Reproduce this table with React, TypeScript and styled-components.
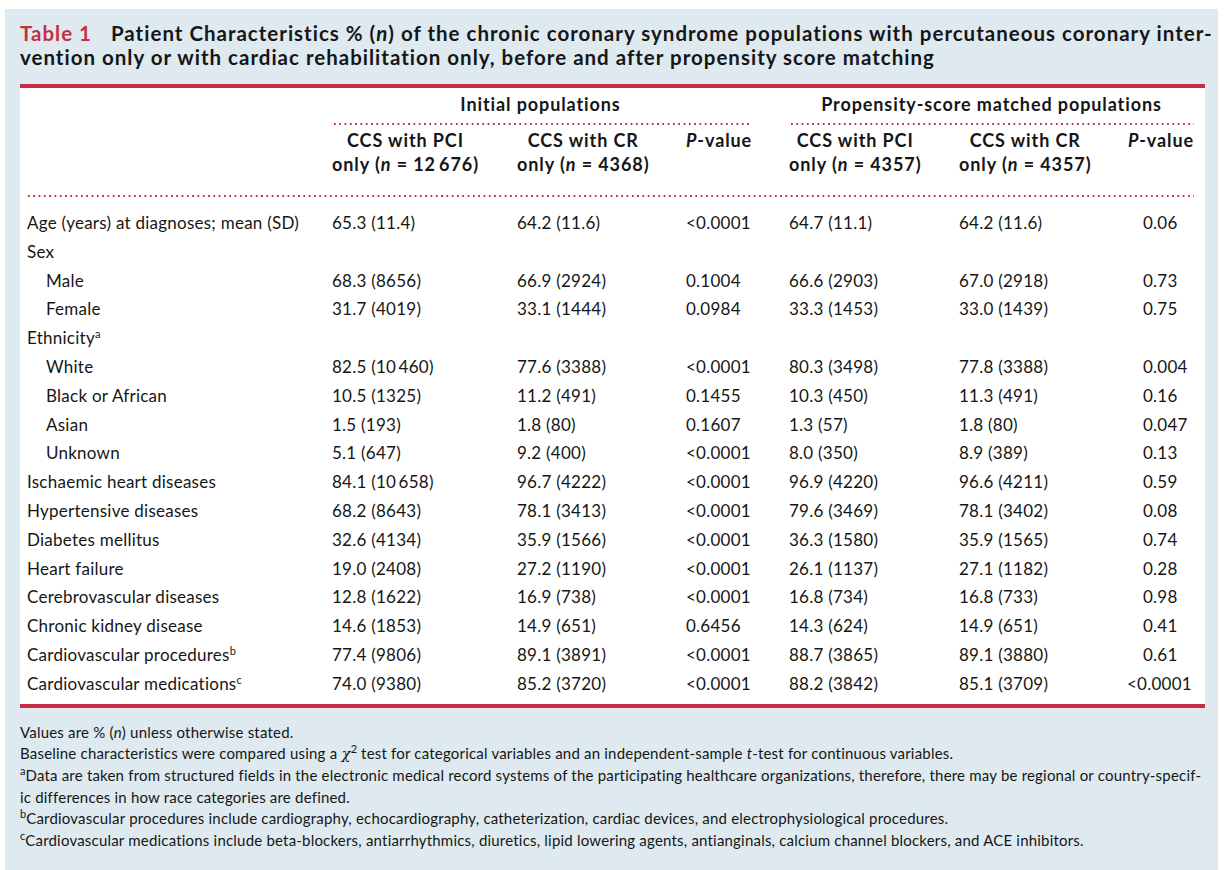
import React, { ReactNode } from "react";
import styled, { createGlobalStyle } from "styled-components";

const RED = "#c62f43";
const INK = "#161616";
const COLS = "305px 185px 169px 103px 170px 168px 67px";

const GlobalStyle = createGlobalStyle`
  html, body {
    margin: 0;
    padding: 0;
    background: #ffffff;
  }
  body {
    font-family: Lato, "Open Sans", "Liberation Sans", sans-serif;
    color: ${INK};
  }
`;

const Panel = styled.section`
  margin: 9px 6px 0 5px;
  padding: 12px 13px 30px 15px;
  background: #deeaf0;
  min-height: 861px;
  box-sizing: border-box;
`;

const Title = styled.h1`
  margin: 0 0 15px;
  font-size: 20.5px;
  line-height: 24px;
  font-weight: 700;
  letter-spacing: 1px;
  white-space: nowrap;
  color: ${INK};
`;

const Label = styled.span`
  color: ${RED};
  margin-right: 13px;
`;

const Sheet = styled.div`
  background: #ffffff;
  border-top: 4px solid ${RED};
  border-bottom: 4px solid ${RED};
  padding: 5px 11px 5px 7px;
`;

const Grid = styled.div`
  display: grid;
  grid-template-columns: ${COLS};
`;

const GroupHead = styled.div<{ $from: number; $to: number; $trim: number }>`
  grid-column: ${(p) => p.$from} / ${(p) => p.$to};
  margin-right: ${(p) => p.$trim}px;
  font-size: 18px;
  font-weight: 700;
  letter-spacing: 0.9px;
  line-height: 22px;
  text-align: center;
  white-space: nowrap;
`;

const Dots = styled.div`
  height: 2px;
  background-image: linear-gradient(to right, ${RED} 2px, transparent 2px);
  background-size: 5.3px 2px;
  background-repeat: repeat-x;
  background-position: 1px 0;
`;

const GroupRule = styled(Dots)`
  margin-top: 8px;
  margin-left: 1px;
`;

const HeadCell = styled.div<{ $right?: boolean }>`
  padding-top: 3px;
  font-size: 18px;
  font-weight: 700;
  letter-spacing: 0.9px;
  line-height: 24px;
  white-space: nowrap;
  text-align: ${(p) => (p.$right ? "right" : "left")};
`;

const HeadBlock = styled.span`
  display: inline-block;
  text-align: center;
`;

const FullRule = styled(Dots)`
  margin: 19px 0 12px;
`;

const Row = styled.div`
  display: grid;
  grid-template-columns: ${COLS};
  font-size: 17px;
  letter-spacing: 0.25px;
  line-height: 28.8px;
  height: 28.8px;
  white-space: nowrap;
`;

const Name = styled.div<{ $indent?: boolean }>`
  padding-left: ${(p) => (p.$indent ? "19px" : "0")};
`;

const Cell = styled.div<{ $pad?: number }>`
  padding-left: ${(p) => p.$pad ?? 0}px;
`;

const Hang = styled.span`
  margin-left: -16px;
`;

const Sup = styled.sup`
  font-size: 11px;
  line-height: 0;
  letter-spacing: 0;
  vertical-align: 6px;
`;

const Notes = styled.div`
  margin-top: 14px;
  font-size: 15px;
  letter-spacing: 0.2px;
  line-height: 21.4px;
`;

const Note = styled.p`
  margin: 0;
  white-space: nowrap;
`;

const Chi = styled.span`
  font-family: "DejaVu Serif", "Liberation Serif", serif;
  font-style: italic;
`;

type Line = {
  name: ReactNode;
  indent?: boolean;
  vals?: string[];
};

const lines: Line[] = [
  { name: "Age (years) at diagnoses; mean (SD)", vals: ["65.3 (11.4)", "64.2 (11.6)", "<0.0001", "64.7 (11.1)", "64.2 (11.6)", "0.06"] },
  { name: "Sex" },
  { name: "Male", indent: true, vals: ["68.3 (8656)", "66.9 (2924)", "0.1004", "66.6 (2903)", "67.0 (2918)", "0.73"] },
  { name: "Female", indent: true, vals: ["31.7 (4019)", "33.1 (1444)", "0.0984", "33.3 (1453)", "33.0 (1439)", "0.75"] },
  { name: <>Ethnicity<Sup>a</Sup></> },
  { name: "White", indent: true, vals: ["82.5 (10\u2009460)", "77.6 (3388)", "<0.0001", "80.3 (3498)", "77.8 (3388)", "0.004"] },
  { name: "Black or African", indent: true, vals: ["10.5 (1325)", "11.2 (491)", "0.1455", "10.3 (450)", "11.3 (491)", "0.16"] },
  { name: "Asian", indent: true, vals: ["1.5 (193)", "1.8 (80)", "0.1607", "1.3 (57)", "1.8 (80)", "0.047"] },
  { name: "Unknown", indent: true, vals: ["5.1 (647)", "9.2 (400)", "<0.0001", "8.0 (350)", "8.9 (389)", "0.13"] },
  { name: "Ischaemic heart diseases", vals: ["84.1 (10\u2009658)", "96.7 (4222)", "<0.0001", "96.9 (4220)", "96.6 (4211)", "0.59"] },
  { name: "Hypertensive diseases", vals: ["68.2 (8643)", "78.1 (3413)", "<0.0001", "79.6 (3469)", "78.1 (3402)", "0.08"] },
  { name: "Diabetes mellitus", vals: ["32.6 (4134)", "35.9 (1566)", "<0.0001", "36.3 (1580)", "35.9 (1565)", "0.74"] },
  { name: "Heart failure", vals: ["19.0 (2408)", "27.2 (1190)", "<0.0001", "26.1 (1137)", "27.1 (1182)", "0.28"] },
  { name: "Cerebrovascular diseases", vals: ["12.8 (1622)", "16.9 (738)", "<0.0001", "16.8 (734)", "16.8 (733)", "0.98"] },
  { name: "Chronic kidney disease", vals: ["14.6 (1853)", "14.9 (651)", "0.6456", "14.3 (624)", "14.9 (651)", "0.41"] },
  { name: <>Cardiovascular procedures<Sup>b</Sup></>, vals: ["77.4 (9806)", "89.1 (3891)", "<0.0001", "88.7 (3865)", "89.1 (3880)", "0.61"] },
  { name: <>Cardiovascular medications<Sup>c</Sup></>, vals: ["74.0 (9380)", "85.2 (3720)", "<0.0001", "88.2 (3842)", "85.1 (3709)", "<0.0001"] },
];

// last P column: values line up at the digit, "<" hangs out to the left
function lastP(v: string) {
  if (v.startsWith("<")) {
    return <Hang>{v}</Hang>;
  }
  return v;
}

function ColHead(props: { top: ReactNode; n: string }) {
  return (
    <HeadCell>
      <HeadBlock>
        {props.top}
        <br />
        only (<i>n</i> = {props.n})
      </HeadBlock>
    </HeadCell>
  );
}

export default function App() {
  return (
    <>
      <GlobalStyle />
      <Panel>
        <Title>
          <Label>Table 1</Label> Patient Characteristics % (<i>n</i>) of the chronic coronary
          syndrome populations with percutaneous coronary inter-
          <br />
          vention only or with cardiac rehabilitation only, before and after propensity score
          matching
        </Title>
        <Sheet>
          <Grid>
            <GroupHead $from={2} $to={5} $trim={40}>
              Initial populations
              <GroupRule />
            </GroupHead>
            <GroupHead $from={5} $to={8} $trim={0}>
              Propensity-score matched populations
              <GroupRule />
            </GroupHead>
            <div />
            <ColHead top="CCS with PCI" n={"12\u2009676"} />
            <ColHead top="CCS with CR" n="4368" />
            <HeadCell>
              <i>P</i>-value
            </HeadCell>
            <ColHead top="CCS with PCI" n="4357" />
            <ColHead top="CCS with CR" n="4357" />
            <HeadCell $right>
              <i>P</i>-value
            </HeadCell>
          </Grid>
          <FullRule />
          {lines.map((l, i) => (
            <Row key={i}>
              <Name $indent={l.indent}>{l.name}</Name>
              {l.vals &&
                l.vals.map((v, j) => (
                  <Cell key={j} $pad={j === 5 ? 16 : 0}>
                    {j === 5 ? lastP(v) : v}
                  </Cell>
                ))}
            </Row>
          ))}
        </Sheet>
        <Notes>
          <Note>
            Values are % (<i>n</i>) unless otherwise stated.
          </Note>
          <Note>
            Baseline characteristics were compared using a <Chi>χ</Chi>
            <Sup>2</Sup> test for categorical variables and an independent-sample <i>t</i>-test for
            continuous variables.
          </Note>
          <Note>
            <Sup>a</Sup>Data are taken from structured fields in the electronic medical record
            systems of the participating healthcare organizations, therefore, there may be regional
            or country-specif-
            <br />
            ic differences in how race categories are defined.
          </Note>
          <Note>
            <Sup>b</Sup>Cardiovascular procedures include cardiography, echocardiography,
            catheterization, cardiac devices, and electrophysiological procedures.
          </Note>
          <Note>
            <Sup>c</Sup>Cardiovascular medications include beta-blockers, antiarrhythmics,
            diuretics, lipid lowering agents, antianginals, calcium channel blockers, and ACE
            inhibitors.
          </Note>
        </Notes>
      </Panel>
    </>
  );
}
